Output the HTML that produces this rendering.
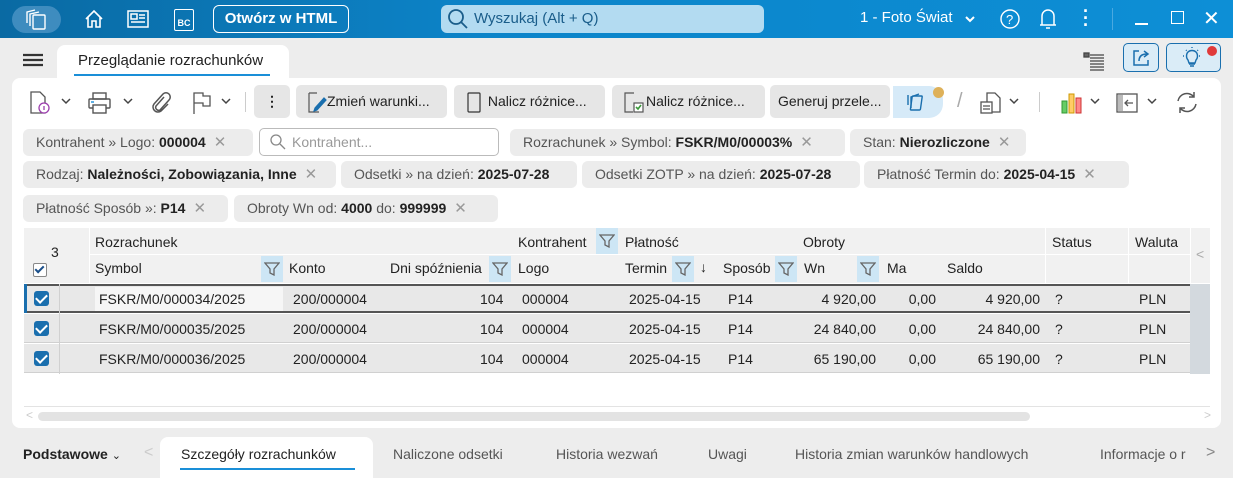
<!DOCTYPE html>
<html><head><meta charset="utf-8"><style>
*{box-sizing:border-box;margin:0;padding:0}
body{width:1233px;height:478px;overflow:hidden;background:#ededed;font-family:"Liberation Sans",sans-serif;font-size:14px;color:#222;position:relative}
.a{position:absolute;white-space:nowrap}
.top{position:absolute;left:0;top:0;width:1233px;height:38px;background:linear-gradient(90deg,#0a6aa3,#0c84c9 40%,#0d8fd6)}
.w{color:#fff}
.panel{position:absolute;left:12px;top:78px;width:1209px;height:350px;background:#fff;border-radius:8px}
.btn{position:absolute;top:85px;height:33px;background:#e6e6e6;border-radius:5px;font-size:14px;line-height:33px;padding-left:8px}
.chip{position:absolute;height:27px;background:#ececec;border-radius:6px;line-height:27px;padding-left:13px;color:#555;font-size:14px;white-space:nowrap}
.chip b{color:#222}
.chip .x{color:#999;margin-left:8px;font-size:15px}
.hd{position:absolute;font-size:14px;color:#222}
.cell{position:absolute;font-size:14px}
.cb{position:absolute;width:15px;height:15px;background:#1a6fae;border-radius:3px}
.cb:after{content:"";position:absolute;left:4px;top:1px;width:5px;height:9px;border:solid #fff;border-width:0 2px 2px 0;transform:rotate(45deg)}
.flt{position:absolute;width:22px;height:26px;background:#cde6f5}
.flt svg{position:absolute;left:3px;top:6px}
.row{position:absolute;left:24px;width:1186px;height:29px;background:#e8e8e8;border-bottom:1px solid #d0d0d0}
.tab{position:absolute;top:446px;color:#555;font-size:14px}
</style></head><body>
<div class="top"></div>
<div class="a" style="left:12px;top:6px;width:49px;height:27px;border-radius:14px;background:#3e8cbf"></div>
<svg class="a" style="left:25px;top:9px" width="24" height="22" fill="none" stroke="#fff" stroke-width="1.4"><rect x="8" y="6" width="12" height="14" rx="1"/><path d="M5 17V5l9-2M2 14V3l8-2"/></svg>
<svg class="a" style="left:83px;top:8px" width="22" height="22" fill="none" stroke="#fff" stroke-width="1.6"><path d="M3 11L11 3l8 8M5 9v10h4v-6h4v6h4V9"/></svg>
<svg class="a" style="left:126px;top:8px" width="24" height="22" fill="none" stroke="#fff" stroke-width="1.5"><rect x="2" y="3" width="20" height="16"/><rect x="5" y="6" width="6" height="5"/><path d="M13 7h6M13 10h6M5 14h14"/></svg>
<div class="a" style="left:174px;top:9px;width:20px;height:22px;border:1.5px solid #fff;border-radius:2px;color:#fff;font-size:9px;font-weight:bold;text-align:center;line-height:26px">BC</div>
<div class="a w" style="left:213px;top:5px;width:136px;height:28px;border:1.5px solid #fff;border-radius:6px;text-align:center;line-height:25px;font-weight:bold;font-size:15px">Otwórz w HTML</div>
<div class="a" style="left:441px;top:5px;width:323px;height:28px;background:#b3dbf1;border-radius:6px"></div>
<svg class="a" style="left:447px;top:8px" width="22" height="22" fill="none" stroke="#1a5d8a" stroke-width="1.8"><circle cx="9" cy="9" r="7"/><path d="M14 14l6 6"/></svg>
<div class="a" style="left:474px;top:10px;font-size:15px;color:#1a5d8a">Wyszukaj (Alt + Q)</div>
<div class="a w" style="left:860px;top:9px;font-size:15px">1 - Foto Świat</div>
<svg class="a" style="left:964px;top:14px" width="12" height="10" fill="none" stroke="#fff" stroke-width="2"><path d="M2 3l4 4 4-4"/></svg>
<svg class="a" style="left:999px;top:8px" width="22" height="22" fill="none" stroke="#fff" stroke-width="1.4"><circle cx="11" cy="11" r="9"/><text x="7" y="16" fill="#fff" stroke="none" font-size="13" font-family="Liberation Sans">?</text></svg>
<svg class="a" style="left:1038px;top:6px" width="20" height="26" fill="none" stroke="#fff" stroke-width="1.5"><path d="M4 19V10a6 6 0 0112 0v9zM2 19h16M8 22h4"/></svg>
<div class="a w" style="left:1083px;top:8px;font-size:18px;line-height:7px;font-weight:bold">·<br>·<br>·</div>
<div class="a" style="left:1112px;top:8px;width:1px;height:22px;background:#4aa9e0"></div>
<div class="a" style="left:1135px;top:23px;width:13px;height:1.5px;background:#fff"></div>
<div class="a" style="left:1171px;top:11px;width:13px;height:13px;border:1.5px solid #fff"></div>
<div class="a w" style="left:1203px;top:6px;font-size:20px">✕</div>

<svg class="a" style="left:23px;top:53px" width="20" height="16"><path d="M0 2h20M0 7h20M0 12h20" stroke="#333" stroke-width="2.2"/></svg>
<div class="panel"></div>
<div class="a" style="left:57px;top:45px;width:232px;height:40px;background:#fff;border-radius:8px 8px 0 0"></div>
<div class="a" style="left:78px;top:52px;font-size:15px">Przeglądanie rozrachunków</div>
<div class="a" style="left:74px;top:74px;width:196px;height:2px;background:#1a8fd8"></div>
<svg class="a" style="left:1083px;top:52px" width="22" height="20" fill="none" stroke="#444" stroke-width="1.3"><rect x="1" y="1" width="5" height="4" fill="#666"/><path d="M7 3h14M7 6h14M7 9h14M7 12h14M7 15h14M7 18h14"/></svg>
<div class="a" style="left:1123px;top:43px;width:36px;height:29px;border:1.2px solid #1a6fae;border-radius:5px;background:#daecf7"></div>
<svg class="a" style="left:1131px;top:48px" width="20" height="20" fill="none" stroke="#1a6fae" stroke-width="1.5"><path d="M8 3H3v14h14v-5M8 13c0-5 3-7 8-7M13 3l4 3-4 3"/></svg>
<div class="a" style="left:1166px;top:43px;width:55px;height:29px;border:1.2px solid #1a6fae;border-radius:5px;background:#daecf7"></div>
<svg class="a" style="left:1180px;top:46px" width="26" height="24" fill="none" stroke="#1a6fae" stroke-width="1.4"><path d="M9 18h6M10 20h4M8 14c-2-2-2-6 0-8 2-2 6-2 8 0 2 2 2 6 0 8l-1 3h-6z"/><path d="M3 10h2M19 10h2M6 4l1 1M18 4l-1 1M12 1v2" stroke-dasharray="1 1"/></svg>
<div class="a" style="left:1207px;top:46px;width:10px;height:10px;border-radius:5px;background:#e03a3a"></div>

<!-- toolbar -->
<svg class="a" style="left:29px;top:91px" width="22" height="24" fill="none" stroke="#555" stroke-width="1.3"><path d="M2 1h9l5 5v16H2z"/><circle cx="15" cy="17" r="5" fill="#fff" stroke="#9c3fae"/><path d="M15 15v4" stroke="#9c3fae"/></svg>
<svg class="a" style="left:61px;top:97px" width="10" height="8" fill="none" stroke="#444" stroke-width="1.5"><path d="M1 2l4 4 4-4"/></svg>
<svg class="a" style="left:87px;top:91px" width="26" height="24" fill="none" stroke="#555" stroke-width="1.4"><rect x="6" y="2" width="13" height="6"/><rect x="2" y="8" width="21" height="9" rx="1"/><rect x="6" y="14" width="13" height="8" fill="#fff"/><path d="M4 11h3" stroke="#1a8fd8"/></svg>
<svg class="a" style="left:123px;top:97px" width="10" height="8" fill="none" stroke="#444" stroke-width="1.5"><path d="M1 2l4 4 4-4"/></svg>
<svg class="a" style="left:151px;top:91px" width="20" height="24" fill="none" stroke="#555" stroke-width="1.5"><path d="M13 6l-8 9a3 3 0 004 4l9-10a4 4 0 00-6-6l-9 10a5 5 0 007 7l7-7"/></svg>
<svg class="a" style="left:191px;top:91px" width="24" height="24" fill="none" stroke="#555" stroke-width="1.3"><path d="M3 23V2h9v3h7v10h-7v-3H3"/></svg>
<svg class="a" style="left:221px;top:97px" width="10" height="8" fill="none" stroke="#444" stroke-width="1.5"><path d="M1 2l4 4 4-4"/></svg>
<div class="a" style="left:245px;top:92px;width:1px;height:20px;background:#ccc"></div>
<div class="btn" style="left:254px;width:36px;text-align:center;padding:0;font-weight:bold">⋮</div>
<div class="btn" style="left:296px;width:151px;padding-left:9px"><svg style="vertical-align:middle" width="22" height="24" fill="none" stroke="#555" stroke-width="1.2"><path d="M4 3h8M4 3v19h10"/><path d="M10 18l9-10 2 2-9 10-3 1z" fill="#1a6fae" stroke="#1a6fae"/></svg>Zmień warunki...</div>
<div class="btn" style="left:454px;width:151px;padding-left:12px"><svg style="vertical-align:middle" width="18" height="24" fill="none" stroke="#333" stroke-width="1.2"><rect x="2" y="3" width="12" height="19" rx="1"/></svg> Nalicz różnice...</div>
<div class="btn" style="left:612px;width:153px;padding-left:10px"><svg style="vertical-align:middle" width="24" height="24" fill="none" stroke="#555" stroke-width="1.2"><path d="M12 3H3v19h8"/><rect x="12" y="13" width="9" height="9" fill="#fff"/><path d="M14 17l2 2 3-4" stroke="#3a9a3a" stroke-width="1.6"/></svg>Nalicz różnice...</div>
<div class="btn" style="left:770px;width:120px">Generuj przele...</div>
<div class="a" style="left:893px;top:86px;width:50px;height:32px;background:#d6eaf8;border-radius:0 14px 14px 0"></div>
<svg class="a" style="left:904px;top:91px" width="26" height="22" fill="none" stroke="#1a6fae" stroke-width="1.4"><rect x="9" y="5" width="10" height="14" rx="1" transform="skewX(-8)"/><path d="M7 17V6l8-3M4 14V4"/></svg>
<div class="a" style="left:933px;top:87px;width:11px;height:11px;border-radius:6px;background:#deb15a"></div>
<div class="a" style="left:957px;top:90px;color:#aaa;font-size:20px">/</div>
<svg class="a" style="left:979px;top:91px" width="24" height="24" fill="none" stroke="#555" stroke-width="1.3"><path d="M8 2h8l5 5v14H8z"/><rect x="2" y="11" width="11" height="11" fill="#fff"/><path d="M4 15h7M4 18h7"/></svg>
<svg class="a" style="left:1009px;top:97px" width="10" height="8" fill="none" stroke="#444" stroke-width="1.5"><path d="M1 2l4 4 4-4"/></svg>
<div class="a" style="left:1039px;top:92px;width:1px;height:20px;background:#ccc"></div>
<svg class="a" style="left:1060px;top:91px" width="26" height="24"><rect x="2" y="10" width="5" height="12" fill="#6c6" stroke="#393" /><rect x="9" y="3" width="5" height="19" fill="#fc6" stroke="#c90"/><rect x="16" y="7" width="5" height="15" fill="#f88" stroke="#c33"/></svg>
<svg class="a" style="left:1090px;top:97px" width="10" height="8" fill="none" stroke="#444" stroke-width="1.5"><path d="M1 2l4 4 4-4"/></svg>
<svg class="a" style="left:1115px;top:91px" width="26" height="24" fill="none" stroke="#555" stroke-width="1.3"><rect x="2" y="3" width="20" height="18"/><rect x="3" y="4" width="5" height="16" fill="#bbb" stroke="none"/><path d="M18 12h-7M13 9l-3 3 3 3"/></svg>
<svg class="a" style="left:1147px;top:97px" width="10" height="8" fill="none" stroke="#444" stroke-width="1.5"><path d="M1 2l4 4 4-4"/></svg>
<svg class="a" style="left:1173px;top:89px" width="28" height="28" fill="none" stroke="#555" stroke-width="1.5"><path d="M5 12a9 9 0 0116-4M23 15a9 9 0 01-16 4M21 3v5h-5M7 24v-5h5"/></svg>

<!-- chips -->
<div class="chip" style="left:23px;top:129px;width:230px">Kontrahent » Logo: <b>000004</b><span class="x">✕</span></div>
<div class="a" style="left:259px;top:128px;width:240px;height:28px;border:1px solid #bbb;border-radius:5px;background:#fff;color:#999;line-height:26px;padding-left:32px;font-size:14px">Kontrahent...</div>
<svg class="a" style="left:270px;top:134px" width="16" height="16" fill="none" stroke="#888" stroke-width="1.3"><circle cx="6" cy="6" r="5"/><path d="M10 10l5 5"/></svg>
<div class="chip" style="left:510px;top:129px;width:335px">Rozrachunek » Symbol: <b>FSKR/M0/00003%</b><span class="x">✕</span></div>
<div class="chip" style="left:850px;top:129px;width:176px">Stan: <b>Nierozliczone</b><span class="x">✕</span></div>
<div class="chip" style="left:23px;top:161px;width:313px">Rodzaj: <b>Należności, Zobowiązania, Inne</b><span class="x">✕</span></div>
<div class="chip" style="left:341px;top:161px;width:236px">Odsetki » na dzień: <b>2025-07-28</b></div>
<div class="chip" style="left:582px;top:161px;width:278px">Odsetki ZOTP » na dzień: <b>2025-07-28</b></div>
<div class="chip" style="left:864px;top:161px;width:265px">Płatność Termin do: <b>2025-04-15</b><span class="x">✕</span></div>
<div class="chip" style="left:23px;top:195px;width:205px">Płatność Sposób »: <b>P14</b><span class="x">✕</span></div>
<div class="chip" style="left:234px;top:195px;width:264px">Obroty Wn od: <b>4000</b> do: <b>999999</b><span class="x">✕</span></div>

<!-- grid header -->
<div class="a" style="left:24px;top:228px;width:1186px;height:55px;background:#f1f1f1"></div>
<div class="a" style="left:90px;top:254px;width:1100px;height:1px;background:#fff"></div>
<div class="a" style="left:1045px;top:228px;width:1px;height:55px;background:#fff"></div>
<div class="a" style="left:1128px;top:228px;width:1px;height:55px;background:#fff"></div>
<div class="a" style="left:1190px;top:228px;width:1px;height:55px;background:#fff"></div>
<div class="a" style="left:89px;top:228px;width:1px;height:55px;background:#fff"></div>
<div class="hd" style="left:51px;top:244px">3</div>
<div class="a" style="left:33px;top:263px;width:14px;height:14px;border:1px solid #888;border-radius:2px;background:#fff"></div>
<div class="a" style="left:37px;top:264px;width:5px;height:9px;border:solid #1a4f8a;border-width:0 2px 2px 0;transform:rotate(45deg)"></div>
<div class="hd" style="left:95px;top:234px">Rozrachunek</div>
<div class="hd" style="left:518px;top:234px">Kontrahent</div>
<div class="flt" style="left:596px;top:228px"><svg width="16" height="14" fill="none" stroke="#666" stroke-width="1.3"><path d="M1 1h14l-5 6v6l-4-2V7z"/></svg></div>
<div class="hd" style="left:625px;top:234px">Płatność</div>
<div class="hd" style="left:803px;top:234px">Obroty</div>
<div class="hd" style="left:1052px;top:234px">Status</div>
<div class="hd" style="left:1135px;top:234px">Waluta</div>
<div class="a" style="left:1196px;top:246px;color:#aaa;font-size:14px">&lt;</div>
<div class="hd" style="left:95px;top:260px">Symbol</div>
<div class="flt" style="left:261px;top:256px"><svg width="16" height="14" fill="none" stroke="#666" stroke-width="1.3"><path d="M1 1h14l-5 6v6l-4-2V7z"/></svg></div>
<div class="hd" style="left:289px;top:260px">Konto</div>
<div class="hd" style="left:390px;top:260px">Dni spóźnienia</div>
<div class="flt" style="left:489px;top:256px"><svg width="16" height="14" fill="none" stroke="#666" stroke-width="1.3"><path d="M1 1h14l-5 6v6l-4-2V7z"/></svg></div>
<div class="hd" style="left:518px;top:260px">Logo</div>
<div class="hd" style="left:625px;top:260px">Termin</div>
<div class="flt" style="left:672px;top:256px"><svg width="16" height="14" fill="none" stroke="#666" stroke-width="1.3"><path d="M1 1h14l-5 6v6l-4-2V7z"/></svg></div>
<div class="hd" style="left:700px;top:259px">↓</div>
<div class="hd" style="left:723px;top:260px">Sposób</div>
<div class="flt" style="left:775px;top:256px"><svg width="16" height="14" fill="none" stroke="#666" stroke-width="1.3"><path d="M1 1h14l-5 6v6l-4-2V7z"/></svg></div>
<div class="hd" style="left:804px;top:260px">Wn</div>
<div class="flt" style="left:857px;top:256px"><svg width="16" height="14" fill="none" stroke="#666" stroke-width="1.3"><path d="M1 1h14l-5 6v6l-4-2V7z"/></svg></div>
<div class="hd" style="left:887px;top:260px">Ma</div>
<div class="hd" style="left:947px;top:260px">Saldo</div>

<!-- rows -->
<div class="row" style="top:284px;height:29px;border-top:2px solid #555;border-bottom:2px solid #555"></div>
<div class="a" style="left:24px;top:284px;width:3px;height:29px;background:#1a6fae"></div>
<div class="a" style="left:95px;top:287px;width:188px;height:24px;background:#f6f6f6"></div>
<div class="row" style="top:314px"></div>
<div class="row" style="top:344px"></div>
<div class="a" style="left:1190px;top:284px;width:20px;height:90px;background:#d3d9de"></div>
<div class="a" style="left:59px;top:284px;width:1px;height:90px;background:#d0d0d0"></div>
<div class="cb" style="left:34px;top:291px"></div>
<div class="cb" style="left:34px;top:321px"></div>
<div class="cb" style="left:34px;top:351px"></div>

<div class="cell" style="left:99px;top:291px">FSKR/M0/000034/2025</div>
<div class="cell" style="left:99px;top:321px">FSKR/M0/000035/2025</div>
<div class="cell" style="left:99px;top:351px">FSKR/M0/000036/2025</div>
<div class="cell" style="left:293px;top:291px">200/000004</div>
<div class="cell" style="left:293px;top:321px">200/000004</div>
<div class="cell" style="left:293px;top:351px">200/000004</div>
<div class="cell" style="left:480px;top:291px">104</div>
<div class="cell" style="left:480px;top:321px">104</div>
<div class="cell" style="left:480px;top:351px">104</div>
<div class="cell" style="left:522px;top:291px">000004</div>
<div class="cell" style="left:522px;top:321px">000004</div>
<div class="cell" style="left:522px;top:351px">000004</div>
<div class="cell" style="left:629px;top:291px">2025-04-15</div>
<div class="cell" style="left:629px;top:321px">2025-04-15</div>
<div class="cell" style="left:629px;top:351px">2025-04-15</div>
<div class="cell" style="left:728px;top:291px">P14</div>
<div class="cell" style="left:728px;top:321px">P14</div>
<div class="cell" style="left:728px;top:351px">P14</div>
<div class="cell" style="right:357px;top:291px">4 920,00</div>
<div class="cell" style="right:357px;top:321px">24 840,00</div>
<div class="cell" style="right:357px;top:351px">65 190,00</div>
<div class="cell" style="right:297px;top:291px">0,00</div>
<div class="cell" style="right:297px;top:321px">0,00</div>
<div class="cell" style="right:297px;top:351px">0,00</div>
<div class="cell" style="right:193px;top:291px">4 920,00</div>
<div class="cell" style="right:193px;top:321px">24 840,00</div>
<div class="cell" style="right:193px;top:351px">65 190,00</div>
<div class="cell" style="left:1055px;top:291px">?</div>
<div class="cell" style="left:1055px;top:321px">?</div>
<div class="cell" style="left:1055px;top:351px">?</div>
<div class="cell" style="left:1139px;top:291px">PLN</div>
<div class="cell" style="left:1139px;top:321px">PLN</div>
<div class="cell" style="left:1139px;top:351px">PLN</div>

<!-- scrollbar -->
<div class="a" style="left:24px;top:406px;width:1186px;height:1px;background:#e3e3e3"></div>
<div class="a" style="left:38px;top:412px;width:992px;height:9px;border-radius:5px;background:#e3e3e3"></div>
<div class="a" style="left:26px;top:408px;color:#ccc;font-size:12px">&lt;</div>
<div class="a" style="left:1204px;top:408px;color:#ccc;font-size:12px">&gt;</div>

<!-- bottom tabs -->
<div class="a" style="left:23px;top:446px;font-weight:bold;font-size:14px">Podstawowe <span style="font-weight:normal;font-size:11px">⌄</span></div>
<div class="a" style="left:144px;top:444px;color:#ccc;font-size:16px">&lt;</div>
<div class="a" style="left:160px;top:437px;width:213px;height:41px;background:#fff;border-radius:8px 8px 0 0"></div>
<div class="tab" style="left:181px;color:#222">Szczegóły rozrachunków</div>
<div class="a" style="left:180px;top:468px;width:175px;height:2px;background:#1a8fd8"></div>
<div class="tab" style="left:393px">Naliczone odsetki</div>
<div class="tab" style="left:556px">Historia wezwań</div>
<div class="tab" style="left:708px">Uwagi</div>
<div class="tab" style="left:795px">Historia zmian warunków handlowych</div>
<div class="tab" style="left:1100px;width:98px;overflow:hidden">Informacje o r</div>
<div class="a" style="left:1206px;top:444px;color:#888;font-size:16px">&gt;</div>
</body></html>
